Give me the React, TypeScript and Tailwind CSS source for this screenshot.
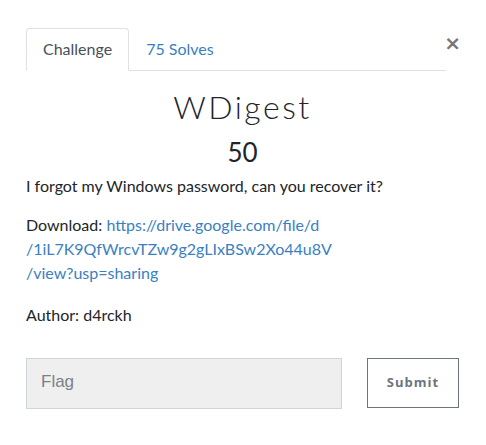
import React from "react";

export default function App() {
  return (
    <div className="w-[486px] h-[445px] bg-white pt-[28px] pl-[26px] pr-[27px] font-['Lato',sans-serif] text-[#212529]">
      <div className="flex items-start">
        <div className="flex-1 flex border-b border-[#dee2e6]">
          <div className="-mb-px px-4 py-2 text-[16px] leading-6 text-[#495057] bg-white border border-[#dee2e6] border-b-white rounded-t-[4px]">
            Challenge
          </div>
          <div className="px-4 py-2 text-[16px] leading-6 text-[#3a7fc1] border border-transparent">
            75 Solves
          </div>
        </div>
        <div className="w-[13px] pt-[3px] flex justify-center text-[#777] font-['DejaVu_Sans',sans-serif] font-bold text-[20px] leading-6">
          ×
        </div>
      </div>

      <div className="mt-[17px] text-center font-light text-[32px] leading-[38px] tracking-[2.5px] text-[#212529]">
        WDigest
      </div>
      <div className="mt-[11px] text-center text-[26px] leading-[30px]">50</div>

      <p className="mt-[7px] text-[16px] leading-6">I forgot my Windows password, can you recover it?</p>
      <p className="mt-[15px] text-[16px] leading-6 w-[320px]">
        Download:{" "}
        <span className="text-[#3a7fc1]">https://drive.google.com/file/d</span>
        <br />
        <span className="text-[#3a7fc1]">/1iL7K9QfWrcvTZw9g2gLIxBSw2Xo44u8V</span>
        <br />
        <span className="text-[#3a7fc1]">/view?usp=sharing</span>
      </p>
      <p className="mt-[18px] text-[16px] leading-6">Author: d4rckh</p>

      <div className="mt-[31px] flex gap-[25px]">
        <div className="flex-1 h-[51px] bg-[#efefef] border border-[#ced4da] flex items-center pl-[14px] pb-[4px] font-['Liberation_Sans',sans-serif] text-[17px] text-[#7b8188]">
          Flag
        </div>
        <div className="w-[92px] h-[50px] border border-[#6c757d] flex items-center justify-center font-['Open_Sans',sans-serif] font-bold text-[13px] tracking-[1px] text-[#6c757d]">
          Submit
        </div>
      </div>
    </div>
  );
}
